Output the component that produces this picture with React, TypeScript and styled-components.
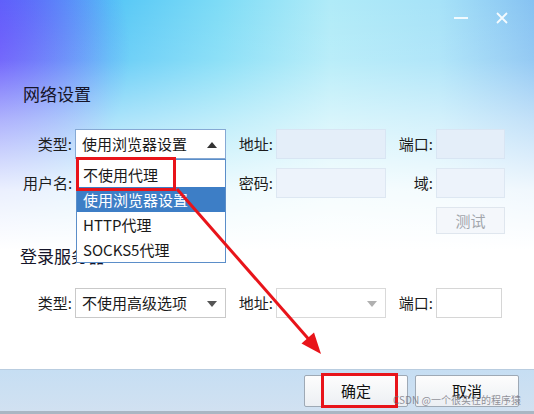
import React from "react";
import styled, { createGlobalStyle } from "styled-components";

const GlobalStyle = createGlobalStyle`
  html, body { margin: 0; padding: 0; background: #fff; }
  body { font-family: "Noto Sans CJK SC", "Noto Sans", sans-serif; }
`;

const Window = styled.div`
  position: relative;
  width: 534px;
  height: 414px;
  overflow: hidden;
  display: flex;
  flex-direction: column;
  background:
    linear-gradient(180deg, rgba(255,255,255,0) 0px, rgba(255,255,255,0.12) 60px, rgba(255,255,255,0.5) 120px, rgba(255,255,255,0.88) 190px, #fff 250px),
    radial-gradient(ellipse 150px 170px at -20px 50px, rgba(98,72,252,0.95), rgba(98,72,252,0) 100%),
    linear-gradient(90deg, #5c8af8 0px, #55c6f6 110px, #7edcf6 220px, #b0ebf8 330px, #a6e2f8 440px, #86c2f2 534px);
`;

const TitleBar = styled.div`
  height: 36px;
  display: flex;
  justify-content: flex-end;
  align-items: center;
  gap: 28px;
  padding-right: 26px;
`;

const MinIcon = styled.span`
  display: block;
  width: 14px;
  height: 2px;
  background: rgba(255, 255, 255, 0.85);
`;

const Heading = styled.h2<{ $top: number; $left: number }>`
  margin: ${(p) => p.$top}px 0 0 ${(p) => p.$left}px;
  font-size: 17px;
  line-height: 24px;
  font-weight: 400;
  color: #15152a;
  position: relative;
  z-index: 1;
`;

const FormGrid = styled.div<{ $top: number; $rows: string }>`
  margin: ${(p) => p.$top}px 0 0 23px;
  display: grid;
  grid-template-columns: 50px 151px 46px 110px 46px 69px;
  grid-template-rows: ${(p) => p.$rows};
  column-gap: 2px;
  row-gap: 9px;
`;

const Label = styled.div`
  text-align: right;
  padding-right: 1px;
  font-size: 15px;
  line-height: 30px;
  color: #1c1c1c;
  white-space: nowrap;
`;

const SelectBox = styled.div<{ $border: string }>`
  position: relative;
  box-sizing: border-box;
  height: 30px;
  background: #fff;
  border: 1px solid ${(p) => p.$border};
  padding-left: 6px;
  font-size: 15px;
  line-height: 28px;
  color: #1a1a1a;
  white-space: nowrap;
`;

const Caret = styled.span<{ $up?: boolean; $color: string }>`
  position: absolute;
  right: 8px;
  top: 12px;
  width: 0;
  height: 0;
  border-left: 5px solid transparent;
  border-right: 5px solid transparent;
  ${(p) =>
    p.$up
      ? `border-bottom: 6px solid ${p.$color};`
      : `border-top: 6px solid ${p.$color};`}
`;

const TextInput = styled.div<{ $bg: string; $border: string; $width?: number }>`
  box-sizing: border-box;
  height: 30px;
  width: ${(p) => (p.$width ? `${p.$width}px` : "auto")};
  background: ${(p) => p.$bg};
  border: 1px solid ${(p) => p.$border};
`;

const TestButton = styled.div`
  grid-column: 6;
  box-sizing: border-box;
  height: 27px;
  background: #f4f7fb;
  border: 1px solid #dfe6ee;
  color: #a2a6ac;
  font-size: 15px;
  line-height: 25px;
  text-align: center;
`;

const DropList = styled.ul`
  position: absolute;
  z-index: 5;
  top: calc(100% + 1px);
  left: 0px;
  right: -1px;
  margin: 0;
  padding: 2px 0 0;
  list-style: none;
  box-sizing: border-box;
  height: 104px;
  background: #fff;
  border: 1px solid #5b8ec9;
`;

const DropItem = styled.li<{ $active?: boolean }>`
  height: 25px;
  padding-left: 6px;
  font-size: 15px;
  line-height: 25px;
  color: ${(p) => (p.$active ? "#fff" : "#1a1a1a")};
  background: ${(p) => (p.$active ? "#3d7ec6" : "transparent")};
`;

const BottomBar = styled.div`
  margin-top: auto;
  box-sizing: border-box;
  height: 45px;
  border-top: 1px solid #b9cde0;
  border-bottom: 3px solid #a9b6c3;
  background: linear-gradient(180deg, #c6def3, #d1e1f1);
  display: flex;
  justify-content: flex-end;
  align-items: flex-start;
  gap: 7px;
  padding: 5px 15px 0 0;
`;

const DialogButton = styled.div`
  box-sizing: border-box;
  width: 104px;
  height: 32px;
  border: 1px solid #9ea9b5;
  border-radius: 2px;
  background: linear-gradient(180deg, #fdfdfd, #eceff3);
  font-size: 15px;
  line-height: 30px;
  text-align: center;
  color: #111;
`;

const Annotation = styled.div<{ $x: number; $y: number; $w: number; $h: number }>`
  position: absolute;
  z-index: 10;
  left: ${(p) => p.$x}px;
  top: ${(p) => p.$y}px;
  width: ${(p) => p.$w}px;
  height: ${(p) => p.$h}px;
  box-sizing: border-box;
  border: 3px solid #e8141a;
  pointer-events: none;
`;

const ArrowLayer = styled.svg`
  position: absolute;
  z-index: 11;
  left: 0;
  top: 0;
  pointer-events: none;
`;

const Watermark = styled.div`
  position: absolute;
  z-index: 12;
  left: 393px;
  top: 393px;
  font-size: 10px;
  line-height: 14px;
  color: rgba(110, 110, 120, 0.75);
  white-space: nowrap;
`;

export default function App() {
  return (
    <>
      <GlobalStyle />
      <Window>
        <TitleBar>
          <MinIcon />
          <svg width="12" height="12" viewBox="0 0 12 12">
            <path d="M1 1 L11 11 M11 1 L1 11" stroke="rgba(255,255,255,0.9)" strokeWidth="1.8" />
          </svg>
        </TitleBar>

        <Heading $top={46} $left={23}>网络设置</Heading>

        <FormGrid $top={23} $rows="30px 30px 27px">
          <Label>类型:</Label>
          <SelectBox $border="#86a9d4">
            使用浏览器设置
            <Caret $up $color="#333" />
            <DropList>
              <DropItem>不使用代理</DropItem>
              <DropItem $active>使用浏览器设置</DropItem>
              <DropItem>HTTP代理</DropItem>
              <DropItem>SOCKS5代理</DropItem>
            </DropList>
          </SelectBox>
          <Label>地址:</Label>
          <TextInput $bg="#e4eef9" $border="#d8e5f3" />
          <Label>端口:</Label>
          <TextInput $bg="#e4eef9" $border="#d8e5f3" />

          <Label>用户名:</Label>
          <div />
          <Label>密码:</Label>
          <TextInput $bg="#edf3fb" $border="#dde7f2" />
          <Label>域:</Label>
          <TextInput $bg="#edf3fb" $border="#dde7f2" />

          <TestButton>测试</TestButton>
        </FormGrid>

        <Heading $top={10} $left={20}>登录服务器</Heading>

        <FormGrid $top={20} $rows="30px">
          <Label>类型:</Label>
          <SelectBox $border="#c9c9c9">
            不使用高级选项
            <Caret $color="#555" />
          </SelectBox>
          <Label>地址:</Label>
          <SelectBox $border="#d9d9d9">
            <Caret $color="#b0b0b0" />
          </SelectBox>
          <Label>端口:</Label>
          <TextInput $bg="#fff" $border="#d6d6d6" $width={66} />
        </FormGrid>

        <BottomBar>
          <DialogButton>确定</DialogButton>
          <DialogButton>取消</DialogButton>
        </BottomBar>

        <Annotation $x={76} $y={157} $w={100} $h={34} />
        <Annotation $x={321} $y={373} $w={77} $h={35} />

        <ArrowLayer width="534" height="414" viewBox="0 0 534 414">
          <line x1="177" y1="189" x2="312" y2="343" stroke="#e8141a" strokeWidth="3" />
          <polygon points="321,354 301.5,343.5 314,332.5" fill="#e8141a" />
        </ArrowLayer>

        <Watermark>CSDN @一个很实在的程序猿</Watermark>
      </Window>
    </>
  );
}
